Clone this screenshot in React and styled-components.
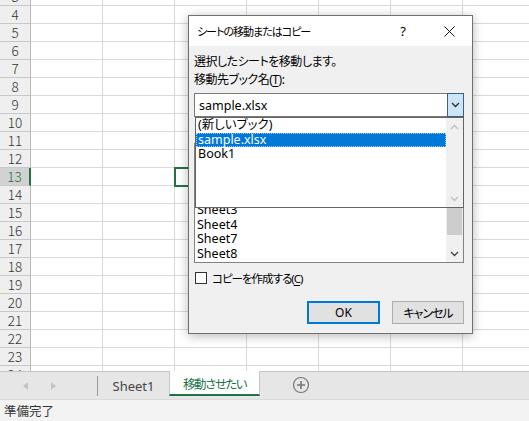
import React from "react";
import styled, { createGlobalStyle } from "styled-components";

const Global = createGlobalStyle`
  html, body { margin: 0; padding: 0; }
  body { width: 529px; height: 421px; overflow: hidden; background: #fff; }
`;

const UI = `"Noto Sans", "Noto Sans CJK JP", sans-serif`;

const Page = styled.div`
  position: relative;
  width: 529px;
  height: 421px;
  display: flex;
  flex-direction: column;
  overflow: hidden;
  font-family: ${UI};
  font-feature-settings: "palt";
`;

const Sheet = styled.div`
  height: 371px;
  overflow: hidden;
  display: flex;
  flex-direction: column;
  flex: none;
`;

const Row = styled.div`
  display: grid;
  grid-template-columns: 31px repeat(7, 72px);
  height: 18px;
  flex: none;
  &:first-child { margin-top: -12px; }
`;

const RowHead = styled.div`
  box-sizing: border-box;
  height: 18px;
  background: ${(p) => (p.$active ? "#d2d2d2" : "#efefef")};
  border-bottom: 1px solid #c8c8c8;
  border-right: ${(p) => (p.$active ? "2px solid #217346" : "1px solid #b8b8b8")};
  color: ${(p) => (p.$active ? "#217346" : "#333")};
  font-family: "Noto Sans CJK JP", sans-serif;
  font-weight: 300;
  font-size: 13.5px;
  line-height: 17px;
  text-align: center;
`;

const Cell = styled.div`
  box-sizing: border-box;
  height: 18px;
  border-right: 1px solid #d9d9d9;
  border-bottom: 1px solid #d9d9d9;
  background: #fff;
  position: relative;
  ${(p) => p.$selected && `outline: 2px solid #217346; outline-offset: -1px; z-index: 1;`}
`;

const TabBar = styled.div`
  box-sizing: border-box;
  height: 28px;
  flex: none;
  background: #e6e6e6;
  border-top: 1px solid #c6c6c6;
  display: flex;
  align-items: stretch;
`;

const NavArrows = styled.div`
  width: 97px;
  display: flex;
  align-items: center;
  padding-left: 23px;
  gap: 23px;
  box-sizing: border-box;
`;

const Separator = styled.div`
  width: 1px;
  background: #9a9a9a;
  margin: 4px 0 3px;
`;

const Tab = styled.div`
  box-sizing: border-box;
  height: ${(p) => (p.$active ? "25px" : "auto")};
  margin-top: ${(p) => (p.$active ? "-1px" : "0")};
  width: ${(p) => p.$w}px;
  display: flex;
  align-items: center;
  justify-content: center;
  background: ${(p) => (p.$active ? "#fff" : "transparent")};
  color: ${(p) => (p.$active ? "#217346" : "#444")};
  border-bottom: ${(p) => (p.$active ? "2px solid #217346" : "none")};
  border-left: ${(p) => (p.$active ? "1px solid #c6c6c6" : "none")};
  border-right: ${(p) => (p.$active ? "1px solid #c6c6c6" : "none")};
  font-size: ${(p) => (p.$active ? "12.5px" : "13px")};
  letter-spacing: ${(p) => (p.$active ? "-1.5px" : "0")};
  padding-top: 1px;
`;

const AddSheet = styled.div`
  margin-left: 32px;
  display: flex;
  align-items: center;
  padding-bottom: 2px;
`;

const StatusBar = styled.div`
  flex: 1;
  background: #f3f3f3;
  border-top: 1px solid #dadada;
  font-size: 12.5px;
  color: #333;
  padding-left: 4px;
  display: flex;
  align-items: center;
`;

/* Dialog */
const Dialog = styled.div`
  position: absolute;
  left: 188px;
  top: 15px;
  width: 285px;
  box-sizing: border-box;
  border: 1px solid #707070;
  background: #f0f0f0;
  box-shadow: 0 2px 10px rgba(0, 0, 0, 0.28);
  z-index: 5;
  color: #000;
  font-size: 12px;
`;

const TitleBar = styled.div`
  height: 30px;
  background: #fff;
  display: flex;
  align-items: center;
  padding-left: 8px;
`;

const Title = styled.div`
  flex: 1;
  font-size: 11px;
  letter-spacing: -1px;
`;

const TitleBtn = styled.div`
  width: ${(p) => p.$w}px;
  height: 30px;
  display: flex;
  align-items: center;
  justify-content: center;
  font-size: 13px;
`;

const Body = styled.div`
  padding: 7px 8px 9px 5px;
  display: flex;
  flex-direction: column;
`;

const Line = styled.div`
  line-height: 18px;
  letter-spacing: -0.5px;
  white-space: nowrap;
`;

const U = styled.span`
  text-decoration: underline;
  text-underline-offset: 2px;
`;

const ComboWrap = styled.div`
  position: relative;
  margin-top: 4px;
  z-index: 3;
`;

const Combo = styled.div`
  box-sizing: border-box;
  height: 24px;
  background: #fff;
  border: 1px solid #7a7a7a;
  display: flex;
  align-items: stretch;
`;

const ComboText = styled.div`
  flex: 1;
  padding-left: 4px;
  font-size: 12.5px;
  display: flex;
  align-items: center;
`;

const ComboBtn = styled.div`
  width: 17px;
  margin: -1px -1px -1px 0;
  box-sizing: border-box;
  border: 1px solid #3d5f80;
  background: #cce4f7;
  display: flex;
  align-items: center;
  justify-content: center;
`;

const DropList = styled.div`
  position: absolute;
  top: 24px;
  left: 1px;
  right: 0;
  height: 91px;
  box-sizing: border-box;
  border: 1px solid #646464;
  background: #fff;
  display: flex;
`;

const Items = styled.div`
  flex: 1;
  display: flex;
  flex-direction: column;
  padding-top: ${(p) => p.$pt || 0}px;
  overflow: hidden;
`;

const Item = styled.div`
  height: 14.5px;
  line-height: 14.5px;
  padding-left: 2px;
  font-size: 12.5px;
  white-space: nowrap;
  flex: none;
  background: ${(p) => (p.$sel ? "#0078d7" : "transparent")};
  color: ${(p) => (p.$sel ? "#fff" : "#000")};
  ${(p) => p.$sel && `outline: 1px dotted #9ccaf0; outline-offset: -1px;`}
`;

const ScrollBar = styled.div`
  width: 17px;
  background: #f0f0f0;
  display: flex;
  flex-direction: column;
  flex: none;
`;

const ScrollArrow = styled.div`
  height: 17px;
  display: flex;
  align-items: center;
  justify-content: center;
  flex: none;
`;

const Track = styled.div`
  flex: 1;
  display: flex;
  flex-direction: column;
  align-items: center;
`;

const Thumb = styled.div`
  width: 15px;
  height: 28px;
  background: #cdcdcd;
  margin-top: ${(p) => p.$offset}px;
`;

const ListBox = styled.div`
  box-sizing: border-box;
  margin-top: 26px;
  height: 120px;
  border: 1px solid #828282;
  background: #fff;
  display: flex;
  overflow: hidden;
`;

const CheckRow = styled.div`
  margin-top: 8px;
  height: 14px;
  display: flex;
  align-items: center;
  gap: 5px;
  padding-left: 1px;
  font-size: 11.5px;
  letter-spacing: -1px;
`;

const Box = styled.div`
  width: 12px;
  height: 12px;
  box-sizing: border-box;
  border: 1px solid #333;
  background: #fff;
`;

const Buttons = styled.div`
  margin-top: 16px;
  display: flex;
  justify-content: flex-end;
  gap: 12px;
`;

const Button = styled.div`
  box-sizing: border-box;
  width: ${(p) => p.$w}px;
  height: 23px;
  background: #e1e1e1;
  border: ${(p) => (p.$primary ? "2px solid #0078d7" : "1px solid #adadad")};
  display: flex;
  align-items: center;
  justify-content: center;
  font-size: 12px;
  letter-spacing: ${(p) => (p.$primary ? "0" : "-1px")};
`;

const Chevron = ({ dir = "down", color = "#333" }) => (
  <svg width="9" height="6" viewBox="0 0 9 6">
    <path
      d={dir === "down" ? "M1 1 L4.5 4.5 L8 1" : "M1 5 L4.5 1.5 L8 5"}
      fill="none"
      stroke={color}
      strokeWidth="1.3"
    />
  </svg>
);

const Tri = ({ left }) => (
  <svg width="5" height="8" viewBox="0 0 5 8">
    <path d={left ? "M5 0 L0 4 L5 8 Z" : "M0 0 L5 4 L0 8 Z"} fill="#c4c4c4" />
  </svg>
);

const rows = Array.from({ length: 22 }, (_, i) => i + 3);
const visibleSheets = ["Sheet3", "Sheet4", "Sheet7", "Sheet8"];

export default function App() {
  return (
    <Page>
      <Global />
      <Sheet>
        {rows.map((r) => (
          <Row key={r}>
            <RowHead $active={r === 13}>{r}</RowHead>
            {Array.from({ length: 7 }, (_, c) => (
              <Cell key={c} $selected={r === 13 && c === 2} />
            ))}
          </Row>
        ))}
      </Sheet>
      <TabBar>
        <NavArrows>
          <Tri left />
          <Tri />
        </NavArrows>
        <Separator />
        <Tab $w={71}>Sheet1</Tab>
        <Tab $w={91} $active>
          移動させたい
        </Tab>
        <AddSheet>
          <svg width="18" height="18" viewBox="0 0 18 18">
            <circle cx="9" cy="9" r="7.5" fill="none" stroke="#777" strokeWidth="1.2" />
            <path d="M9 5 V13 M5 9 H13" stroke="#777" strokeWidth="1.6" />
          </svg>
        </AddSheet>
      </TabBar>
      <StatusBar>準備完了</StatusBar>

      <Dialog>
        <TitleBar>
          <Title>シートの移動またはコピー</Title>
          <TitleBtn $w={46}>?</TitleBtn>
          <TitleBtn $w={46}>
            <svg width="11" height="11" viewBox="0 0 11 11">
              <path d="M0.5 0.5 L10.5 10.5 M10.5 0.5 L0.5 10.5" stroke="#111" strokeWidth="1" />
            </svg>
          </TitleBtn>
        </TitleBar>
        <Body>
          <Line>選択したシートを移動します。</Line>
          <Line>
            移動先ブック名(<U>T</U>):
          </Line>
          <ComboWrap>
            <Combo>
              <ComboText>sample.xlsx</ComboText>
              <ComboBtn>
                <Chevron color="#2b2b2b" />
              </ComboBtn>
            </Combo>
            <DropList>
              <Items>
                <Item>(新しいブック)</Item>
                <Item $sel>sample.xlsx</Item>
                <Item>Book1</Item>
              </Items>
              <ScrollBar>
                <ScrollArrow>
                  <Chevron dir="up" color="#c0c0c0" />
                </ScrollArrow>
                <Track />
                <ScrollArrow>
                  <Chevron color="#c0c0c0" />
                </ScrollArrow>
              </ScrollBar>
            </DropList>
          </ComboWrap>
          <ListBox>
            <Items $pt={59.25}>
              {visibleSheets.map((s) => (
                <Item key={s}>{s}</Item>
              ))}
            </Items>
            <ScrollBar>
              <ScrollArrow>
                <Chevron dir="up" color="#606060" />
              </ScrollArrow>
              <Track>
                <Thumb $offset={46} />
              </Track>
              <ScrollArrow>
                <Chevron color="#404040" />
              </ScrollArrow>
            </ScrollBar>
          </ListBox>
          <CheckRow>
            <Box />
            <span>
              コピーを作成する(<U>C</U>)
            </span>
          </CheckRow>
          <Buttons>
            <Button $w={73} $primary>
              OK
            </Button>
            <Button $w={72}>キャンセル</Button>
          </Buttons>
        </Body>
      </Dialog>
    </Page>
  );
}
